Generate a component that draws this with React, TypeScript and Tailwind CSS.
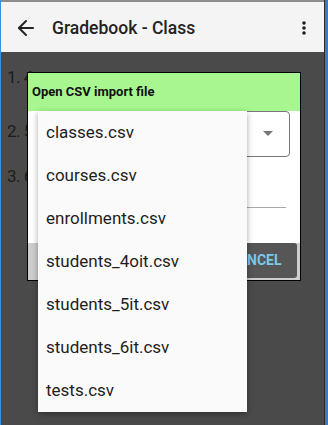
import { ArrowLeft } from "lucide-react";

const files = [
  "classes.csv",
  "courses.csv",
  "enrollments.csv",
  "students_4oit.csv",
  "students_5it.csv",
  "students_6it.csv",
  "tests.csv",
];

export default function App() {
  return (
    <div className="relative w-[328px] h-[425px] overflow-hidden flex border-l border-l-[#3b8fe3] border-r-[3px] border-r-[#2f7ed6] font-['Roboto',sans-serif]">
      <div className="flex-1 flex flex-col border-r border-r-[#2a2a2a]">
        {/* status line + toolbar */}
        <div className="h-[2px] bg-[#8d8d8d]" />
        <div className="h-[50px] bg-[#f4f4f4] flex items-center pt-[2px] text-[#222]">
          <ArrowLeft className="ml-[13px] w-6 h-6" strokeWidth={2} />
          <div className="ml-[14px] text-[17.5px] font-medium">
            Gradebook - Class
          </div>
          <svg className="ml-auto mr-[17px]" width="6" height="16" viewBox="0 0 6 16">
            <circle cx="3" cy="3" r="1.8" fill="#222" />
            <circle cx="3" cy="8" r="1.8" fill="#222" />
            <circle cx="3" cy="13" r="1.8" fill="#222" />
          </svg>
        </div>

        {/* dimmed list behind dialog */}
        <div className="flex-1 bg-[#4a4a4a] text-[#1c1c1c] text-[17px] pl-[6px] tracking-[-0.5px]">
          <div className="mt-[14px] leading-[22px]">1. 4</div>
          <div className="mt-[32px] leading-[22px]">2. 5</div>
          <div className="mt-[23px] leading-[22px]">3. 6</div>
        </div>
      </div>

      {/* dialog */}
      <div className="absolute left-[26px] top-[72px] w-[274px] h-[209px] border border-black flex flex-col">
        <div className="h-[38px] bg-[#a7f68f] flex items-center pl-[4px] text-[13px] font-bold text-[#111]">
          Open CSV import file
        </div>
        <div className="h-[132px] bg-white relative">
          <div className="absolute left-[10px] top-0 w-[252px] h-[46px] border border-[#777] rounded-[4px] flex items-center justify-end pr-[16px]">
            <svg width="10" height="6" viewBox="0 0 10 6">
              <path d="M0 0h10L5 5z" fill="#777" />
            </svg>
          </div>
          <div className="absolute left-[10px] top-[96px] w-[248px] h-px bg-[#aaa]" />
        </div>
        <div className="flex-1 bg-[#cdcdcd] flex justify-end items-start pr-[3px]">
          <div className="h-[35px] w-[84px] bg-[#565656] rounded-[3px] flex items-center justify-center text-[14px] font-bold text-[#7cc7ee]">
            CANCEL
          </div>
        </div>
      </div>

      {/* dropdown popup */}
      <div className="absolute left-[37px] top-[111px] w-[209px] bg-[#fafafa] shadow-[0_2px_6px_rgba(0,0,0,0.35)] flex flex-col">
        {files.map((f) => (
          <div key={f} className="h-[43px] flex items-center pl-[8px] text-[17px] text-[#1e1e1e]">
            {f}
          </div>
        ))}
      </div>
    </div>
  );
}
